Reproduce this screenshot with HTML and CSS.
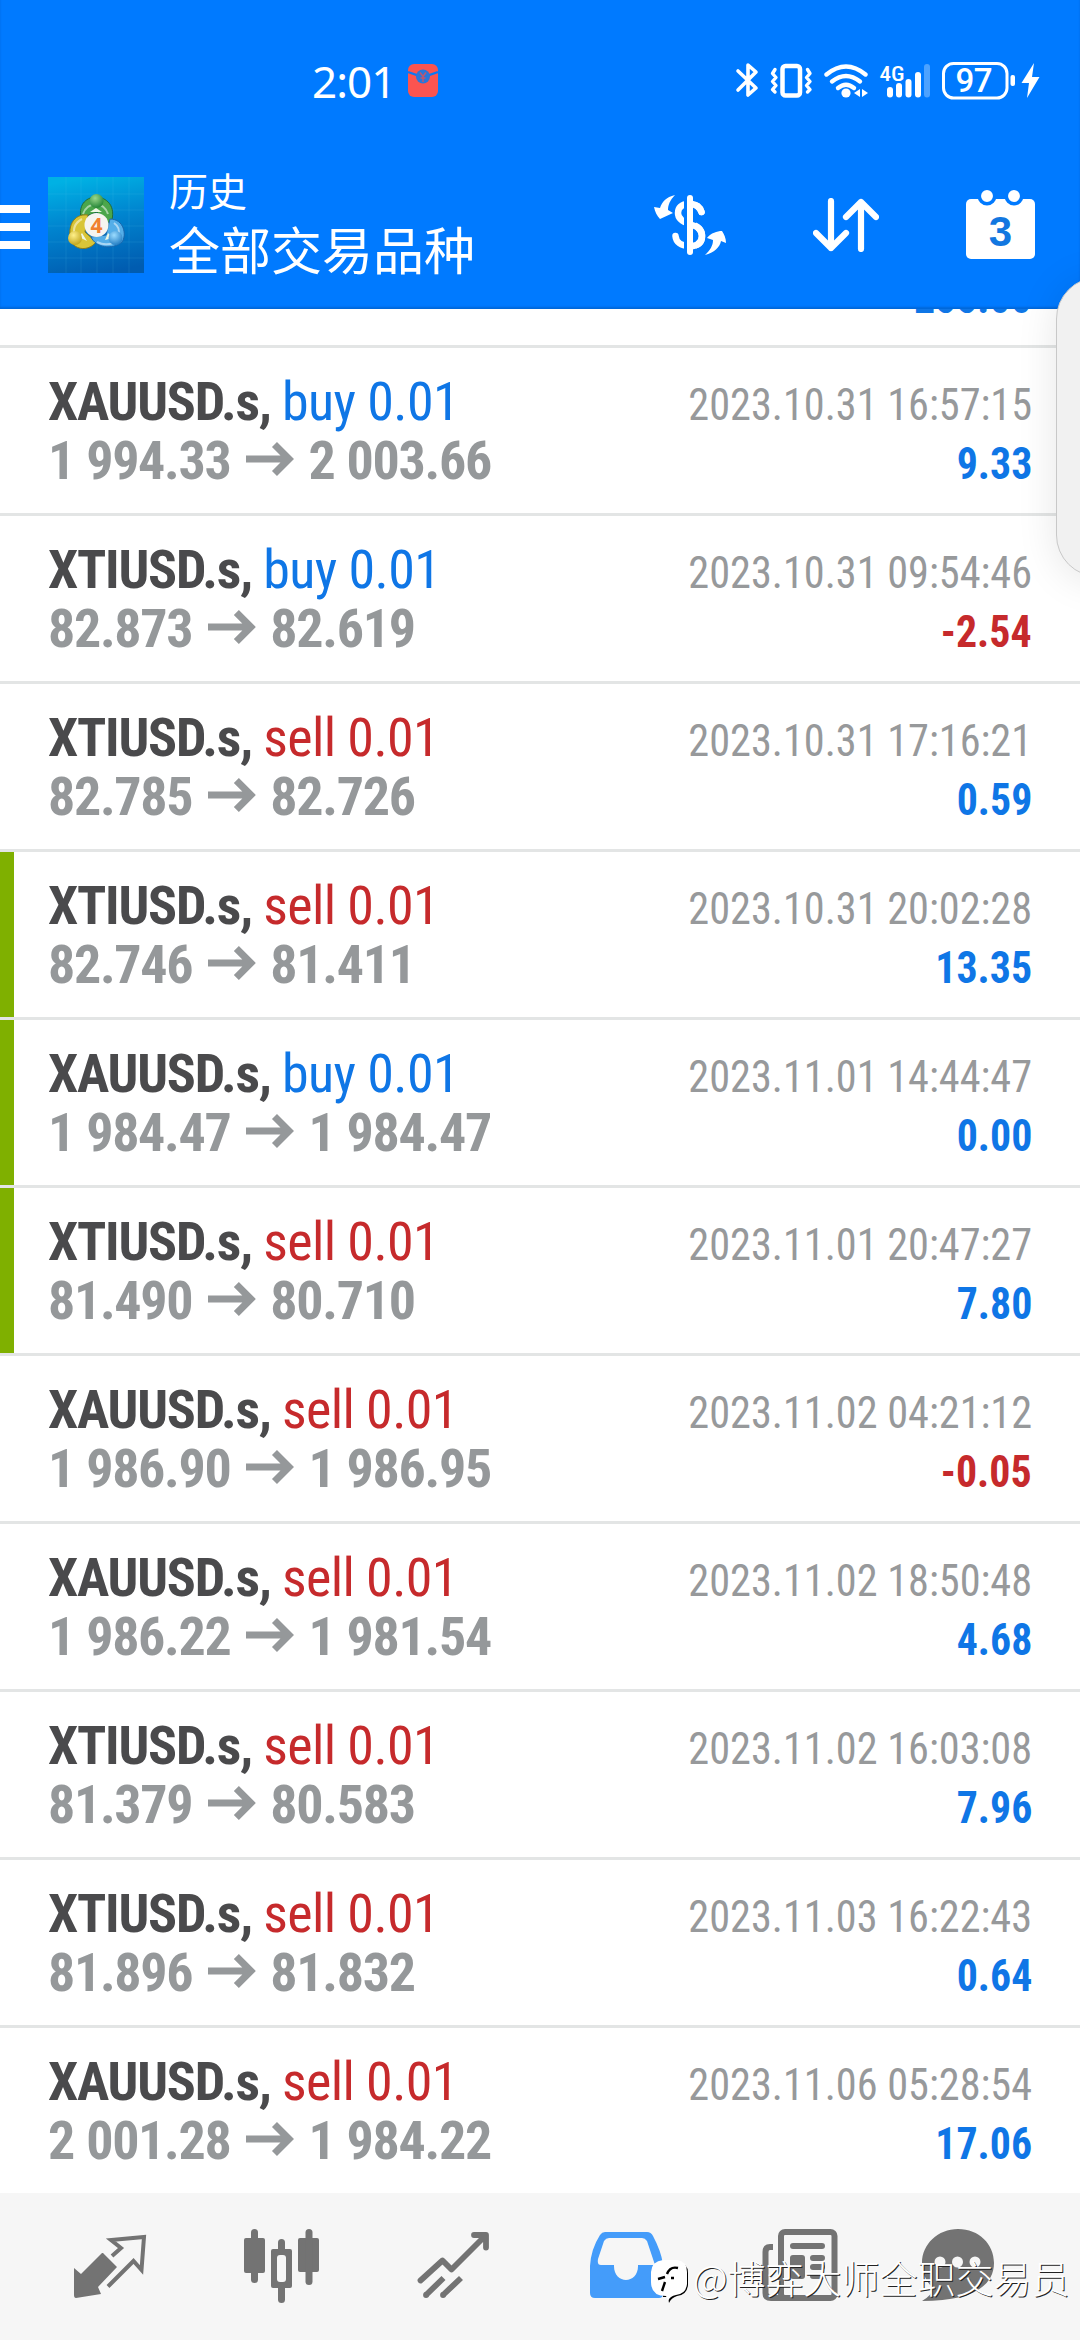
FILE: index.html
```html
<!DOCTYPE html>
<html lang="zh-CN">
<head>
<meta charset="utf-8">
<title>历史</title>
<link rel="stylesheet" href="styles.css">
</head>
<body>
<div class="screen">
  <header class="top">
    <div class="status">
      <div class="status-left">
        <span class="clock">2:01</span>
        <svg class="packet" width="32" height="34" viewBox="0 0 32 34"><rect x="1" y="0" width="30" height="33" rx="6" fill="#fb5450"/><path d="M1 8Q16 15 31 8" fill="none" stroke="#0a78f5" stroke-width="2.4"/><circle cx="16" cy="12.500" r="7" fill="#2b76d8"/><path d="M13 8.500l3 4 3-4M16 12v6M13.500 14h5" fill="none" stroke="#c0566f" stroke-width="1.500"/></svg>
      </div>
      <svg class="status-icons" width="310" height="40" viewBox="734 60 310 40" fill="none" stroke="#fff">
        <path d="M738 71L756 88L748 95V65L756 72L738 90" stroke-width="3.600" stroke-linejoin="round" stroke-linecap="round"/>
        <rect x="782.500" y="66" width="17.500" height="29.500" rx="3" stroke-width="4.500"/>
        <path d="M775 69.500l-2.500 4 3.500 4-3.500 4 3.500 4-3.500 4 2.500 2.500M807.500 69.500l2.500 4-3.500 4 3.500 4-3.500 4 3.500 4-2.500 2.500" stroke-width="3.400" stroke-linecap="round" stroke-linejoin="round"/>
        <g stroke-width="4.400" stroke-linecap="round"><path d="M826.500 74.500Q846 58.500 865.500 74.500"/><path d="M832 81.500Q846 70.500 860 81.500"/><path d="M838 88Q846 81.500 854 88"/></g>
        <g fill="#fff" stroke="none"><circle cx="846" cy="93" r="4.600"/><path d="M860 89v8l-6-4zM862 89v8l6-4z"/>
        <rect x="887" y="87" width="6" height="10.500" rx="3"/><rect x="896" y="83" width="6" height="14.500" rx="3"/><rect x="905.500" y="79" width="6" height="18.500" rx="3"/><rect x="915" y="72" width="6" height="25.500" rx="3"/><rect x="924" y="64" width="6" height="33.500" rx="3" opacity=".3"/>
        <rect x="1010.500" y="75" width="4.500" height="11" rx="2"/><path d="M1034 63L1021.500 83H1029L1027 98L1039.500 77H1032z"/>
        <text class="net" x="879.500" y="80.500" textLength="25" lengthAdjust="spacingAndGlyphs">4G</text><text class="charge" x="955.500" y="92">97</text></g>
        <rect x="943.500" y="63.500" width="63.500" height="34.500" rx="10" stroke-width="3"/>
      </svg>
    </div>
    <div class="appbar">
      <svg class="menu" width="30" height="44" viewBox="0 0 30 44" fill="#fff"><path d="M0 0h30v8H0zM0 18h30v8H0zM0 36h30v8H0z"/></svg>
      <svg class="logo" width="96" height="96" viewBox="0 0 96 96">
        <defs>
          <linearGradient id="sky" x1="0.400" y1="0" x2="0.600" y2="1"><stop offset="0" stop-color="#00b1e4"/><stop offset=".45" stop-color="#0084cf"/><stop offset="1" stop-color="#005cb0"/></linearGradient>
          <radialGradient id="gr" cx=".4" cy=".3" r=".8"><stop offset="0" stop-color="#9bd88c"/><stop offset="1" stop-color="#147a2b"/></radialGradient>
          <radialGradient id="ye" cx=".4" cy=".3" r=".8"><stop offset="0" stop-color="#fff08a"/><stop offset="1" stop-color="#b99c10"/></radialGradient>
          <radialGradient id="bl" cx=".4" cy=".3" r=".8"><stop offset="0" stop-color="#9bdcff"/><stop offset="1" stop-color="#1673bd"/></radialGradient>
        </defs>
        <rect width="96" height="96" fill="url(#sky)"/>
        <path d="M0 17H96M0 33H96M0 49H96M0 65H96M0 81H96M18 0V96M33 0V96M49 0V96M65 0V96M81 0V96" stroke="#5ccdf0" stroke-opacity=".16" stroke-width=".8"/>
        <path d="M33 41C30 26 40 20 48 20C58 20 69 29 63 46L56 44L49 35Z" fill="#4ba64b" stroke="#236c36"/>
        <path d="M40 38C25 36 18 51 24 66C30 74 42 73 48 65L37 55Z" fill="#d9c538" stroke="#8c7a18"/>
        <path d="M62 42C76 42 79 58 74 65C64 73 48 71 43 60L58 58Z" fill="#54aee8" stroke="#1b66ab"/>
        <path d="M35 37Q38 28 48 27Q57 28 60 37M27 60Q23 48 34 42M70 58Q73 51 66 46M49 65Q57 69 65 66" fill="none" stroke="#fff" stroke-opacity=".5" stroke-width="2"/>
        <path d="M42 35l6-4 6 4zM34 56l-3 4 8 4zM60 56l5 5-8 2z" fill="#eef7e4"/>
        <circle cx="48.500" cy="24" r="7" fill="url(#gr)"/><circle cx="27" cy="61" r="7" fill="url(#ye)"/><circle cx="67.500" cy="61" r="7" fill="url(#bl)"/>
        <circle cx="48.500" cy="48" r="12" fill="#f6f4f0"/>
        <text class="four" x="42.500" y="55.500">4</text>
      </svg>
      <div class="titles"><span class="title-small">历史</span><span class="title-large">全部交易品种</span></div>
      <div class="actions">
        <svg width="72" height="60" viewBox="654 195 72 60"><g fill="none" stroke="#fff" stroke-width="6.500"><path d="M701.500 212C700 206 695 204 689 204C681 204 678 208 678 213C678 219 683 222 690 224C698 226 702 230 702 236C702 243 697 246 689 246C681 246 676 242 675.500 236" stroke-linecap="round"/></g><path d="M690 195V255" stroke="#007aff" stroke-width="12"/><path d="M692 204C697 205 700 208 701.500 212M692 225C699 227 702 231 702 236C702 242 698 245 693 246" fill="none" stroke="#fff" stroke-width="6.500" stroke-linecap="round"/><path d="M690 198V252" stroke="#fff" stroke-width="6" stroke-linecap="round"/><path fill="#fff" d="M675 195C666 197 662 202 660 208L654 207C655 212 657 216 660 219L673 213L668 210C668 205 670 200 675 195zM705 255C714 253 720 247 721 241L726 243C726 238 724 234 722 231C717 231 711 233 707 238L713 240C713 246 710 250 705 255z"/></svg>
        <svg width="66" height="54" viewBox="813 198 66 54" fill="none" stroke="#fff" stroke-width="6.200" stroke-linecap="round" stroke-linejoin="round"><path d="M831 201V248M816 233L831 248L846 233M861 249V202M846 217L861 202L876 217"/></svg>
        <svg width="70" height="70" viewBox="966 189 70 70"><rect x="966" y="198" width="69" height="60" rx="5" fill="#fff"/><g fill="#fff" stroke="#007aff" stroke-width="3.500"><circle cx="987" cy="195" r="7.700"/><circle cx="1014" cy="195" r="7.700"/></g><text class="day" x="1000.500" y="245">3</text></svg>
      </div>
    </div>
  </header>

  <main class="list">
    <div class="row row-first"><div class="result"><span class="amount up">255.00</span></div></div>
    <div class="row"><div class="deal"><p class="name">XAUUSD.s, <span class="side up">buy 0.01</span></p><p class="prices">1 994.33<i class="arrow"></i>2 003.66</p></div><div class="result"><span class="time">2023.10.31 16:57:15</span><span class="amount up">9.33</span></div></div>
    <div class="row"><div class="deal"><p class="name">XTIUSD.s, <span class="side up">buy 0.01</span></p><p class="prices">82.873<i class="arrow"></i>82.619</p></div><div class="result"><span class="time">2023.10.31 09:54:46</span><span class="amount down">-2.54</span></div></div>
    <div class="row"><div class="deal"><p class="name">XTIUSD.s, <span class="side down">sell 0.01</span></p><p class="prices">82.785<i class="arrow"></i>82.726</p></div><div class="result"><span class="time">2023.10.31 17:16:21</span><span class="amount up">0.59</span></div></div>
    <div class="row marked"><div class="deal"><p class="name">XTIUSD.s, <span class="side down">sell 0.01</span></p><p class="prices">82.746<i class="arrow"></i>81.411</p></div><div class="result"><span class="time">2023.10.31 20:02:28</span><span class="amount up">13.35</span></div></div>
    <div class="row marked"><div class="deal"><p class="name">XAUUSD.s, <span class="side up">buy 0.01</span></p><p class="prices">1 984.47<i class="arrow"></i>1 984.47</p></div><div class="result"><span class="time">2023.11.01 14:44:47</span><span class="amount up">0.00</span></div></div>
    <div class="row marked"><div class="deal"><p class="name">XTIUSD.s, <span class="side down">sell 0.01</span></p><p class="prices">81.490<i class="arrow"></i>80.710</p></div><div class="result"><span class="time">2023.11.01 20:47:27</span><span class="amount up">7.80</span></div></div>
    <div class="row"><div class="deal"><p class="name">XAUUSD.s, <span class="side down">sell 0.01</span></p><p class="prices">1 986.90<i class="arrow"></i>1 986.95</p></div><div class="result"><span class="time">2023.11.02 04:21:12</span><span class="amount down">-0.05</span></div></div>
    <div class="row"><div class="deal"><p class="name">XAUUSD.s, <span class="side down">sell 0.01</span></p><p class="prices">1 986.22<i class="arrow"></i>1 981.54</p></div><div class="result"><span class="time">2023.11.02 18:50:48</span><span class="amount up">4.68</span></div></div>
    <div class="row"><div class="deal"><p class="name">XTIUSD.s, <span class="side down">sell 0.01</span></p><p class="prices">81.379<i class="arrow"></i>80.583</p></div><div class="result"><span class="time">2023.11.02 16:03:08</span><span class="amount up">7.96</span></div></div>
    <div class="row"><div class="deal"><p class="name">XTIUSD.s, <span class="side down">sell 0.01</span></p><p class="prices">81.896<i class="arrow"></i>81.832</p></div><div class="result"><span class="time">2023.11.03 16:22:43</span><span class="amount up">0.64</span></div></div>
    <div class="row"><div class="deal"><p class="name">XAUUSD.s, <span class="side down">sell 0.01</span></p><p class="prices">2 001.28<i class="arrow"></i>1 984.22</p></div><div class="result"><span class="time">2023.11.06 05:28:54</span><span class="amount up">17.06</span></div></div>
  </main>

  <nav class="tabs">
    <svg viewBox="24 2193 172 147"><path d="M103 2253L117 2267L98 2287L101 2294L76 2298Q74 2298 74 2295V2268L81 2274L102 2253Z" fill="#737373"/><path d="M112 2256L121 2248L111 2240L144 2237L141.500 2270L133.500 2261L108 2286.500" fill="none" stroke="#737373" stroke-width="4"/></svg>
    <svg viewBox="196 2193 172 147"><g fill="#737373"><rect x="244" y="2238" width="21" height="35" rx="2"/><rect x="251" y="2229" width="7" height="54" rx="3.500"/><rect x="298" y="2238" width="21" height="34" rx="2"/><rect x="305.500" y="2229" width="7" height="56" rx="3.500"/><rect x="278" y="2239" width="7" height="64" rx="3.500"/><rect x="271" y="2249" width="21" height="39" rx="2"/></g><rect x="277" y="2255" width="9" height="27" rx="3" fill="#f6f6f6"/></svg>
    <svg viewBox="368 2193 172 147" fill="none" stroke="#737373" stroke-width="5.800"><path d="M420.500 2280.500L442.500 2260.500L451.500 2269.500L485.500 2235.500M474 2235H486V2247.500" stroke-linecap="round" stroke-linejoin="round"/><path d="M426 2295L443.500 2278M443 2295L461 2278" /><path d="M426 2295h.1M443 2295h.1" stroke-linecap="round"/></svg>
    <svg viewBox="540 2193 172 147"><path fill="#449cfa" fill-rule="evenodd" d="M605 2232H647Q651 2232 653 2236Q661 2251 663 2264V2294Q663 2298 659 2298H595Q590 2298 590 2293V2266Q591 2249 600 2235Q602 2232 605 2232ZM609 2238Q606 2238 604 2241L598 2259Q597 2265 601 2265H614C613 2285 639 2285 638 2265H655L647 2241Q645 2238 642 2238Z"/></svg>
    <svg viewBox="712 2193 172 147" fill="none" stroke="#737373"><rect x="781" y="2232" width="53.500" height="66" rx="4" stroke-width="6"/><path d="M773 2247H770Q765.500 2247 765.500 2252V2293Q765.500 2298 771 2298H828" stroke-width="6"/><g stroke-width="6" stroke-linecap="round"><path d="M793 2246H822M813 2258H822M813 2267H822M813 2276H822"/></g><rect x="790" y="2255" width="15" height="24" rx="3" fill="#737373" stroke="none"/></svg>
    <svg viewBox="884 2193 172 147"><path fill="#737373" d="M958 2229C979 2229 994 2244 994 2263C994 2287 970 2301 922 2301Q934 2294 932 2287C925 2280 922 2271 922 2263C922 2244 938 2229 958 2229Z"/><g fill="#f6f6f6"><circle cx="940" cy="2262" r="5.500"/><circle cx="957.500" cy="2262" r="5.500"/><circle cx="975" cy="2262" r="5.500"/></g></svg>
  </nav>

  <div class="edge-panel"></div>
  <div class="watermark">
    <svg width="40" height="44" viewBox="650 2260 40 44"><path d="M665 2263H678Q688 2264 688 2274V2286Q687 2296 677 2297Q671 2299 669 2304L668 2298H663Z" fill="#000"/><path d="M663 2261H677Q687 2262 687 2273V2285Q686 2295 676 2296Q670 2297 668 2302L666 2297Q651 2297 651 2283V2273Q652 2262 663 2261Z" fill="#fff"/><path d="M658 2280L665 2278M662 2292L665 2283M667 2275Q670 2267 678 2269M671 2279H674" fill="none" stroke="#000" stroke-width="2.400"/></svg>
    <span>@博弈大师全职交易员</span>
  </div>
</div>
</body>
</html>
```
FILE: styles.css
```css
* { box-sizing: border-box; }
body { margin: 0; background: #fff; }
p { margin: 0; }

.screen {
  position: relative;
  display: flex;
  flex-direction: column;
  width: 1080px;
  height: 2340px;
  overflow: hidden;
  font-family: "Roboto Condensed", Roboto, sans-serif;
}

/* Header */
.top {
  display: flex;
  flex: 0 0 309px;
  flex-direction: column;
  background: #007aff;
  color: #fff;
  box-shadow: inset 0 -2px 2px rgba(0, 60, 130, .3);
}
.status {
  display: flex;
  justify-content: space-between;
  height: 141px;
  padding: 60px 36px 0 312px;
}
.status-left { display: flex; gap: 18px; height: 40px; }
.clock { width: 77px; font: 450 44px/42px "Noto Sans", sans-serif; letter-spacing: -1px; }
.packet { margin-top: 4px; }
.net { font: 500 21px "Roboto Condensed", Roboto, sans-serif; }
.charge { font: 500 33px Roboto, sans-serif; letter-spacing: -.5px; }

.appbar {
  display: flex;
  align-items: center;
  height: 168px;
  padding-right: 44px;
}
.menu { margin-right: 18px; margin-top: 4px; }
.four { font: 700 21px "Open Sans", sans-serif; fill: #f08030; }
.titles {
  display: flex;
  flex-direction: column;
  margin: -10px 0 0 25px;
  font-family: "Noto Sans CJK SC", sans-serif;
}
.title-small { font-size: 39px; line-height: 56px; }
.title-large { font-size: 51px; line-height: 62px; }
.actions {
  display: flex;
  align-items: center;
  gap: 87px;
  margin-left: auto;
}
.day { font: 700 42px "Liberation Sans", sans-serif; fill: #1277e0; text-anchor: middle; }

/* Deals */
.list {
  display: flex;
  flex: 1;
  flex-direction: column;
  justify-content: flex-end;
  overflow: hidden;
  min-height: 0;
}
.row {
  display: flex;
  flex: none;
  justify-content: space-between;
  height: 168px;
  padding: 24px 48px 0;
  border-top: 3px solid #e3e5e5;
}
.row-first { height: 36px; padding-top: 0; border: 0; justify-content: flex-end; align-items: flex-end; padding-bottom: 18px; }
.marked {
  background: linear-gradient(90deg, #7fb000 14px, transparent 14px);
  background-clip: padding-box;
}
.deal, .result { display: flex; flex-direction: column; }
.result { align-items: flex-end; padding-top: 3px; }
.name, .prices {
  font-size: 54px;
  font-weight: 700;
  line-height: 59px;
  white-space: pre;
}
.name { color: #4a4a4c; letter-spacing: -1.2px; }
.prices { color: #95989a; letter-spacing: -1.3px; word-spacing: 1px; }
.side { font-weight: 400; letter-spacing: -.6px; }
.time, .amount { font-size: 45px; line-height: 59px; transform-origin: right; }
.time { color: #97999b; transform: scaleX(.939); }
.amount { font-weight: 700; transform: scaleX(.93); }
.up { color: #0f76e6; }
.down { color: #c62a2c; }
.arrow {
  display: inline-block;
  width: 48px;
  height: 34px;
  margin: 0 14.5px 0 15.5px;
  vertical-align: 3px;
  background: #95989a;
  clip-path: polygon(0 13.5px, 34.500px 13.5px, 26px 5px, 31px 0, 48px 17px, 31px 34px, 26px 29px, 34.500px 20.5px, 0 20.5px);
}

/* Bottom tabs */
.tabs {
  display: flex;
  flex: 0 0 147px;
  padding: 0 24px;
  background: #f6f6f6;
}
.tabs svg { width: 172px; height: 147px; }

/* Overlays */
.edge-panel {
  position: absolute;
  top: 277px;
  right: -60px;
  width: 84px;
  height: 300px;
  border: 1px solid #c8c8c8;
  border-radius: 45px;
  background: #f1f1f1;
  box-shadow: 0 4px 40px rgba(0, 0, 0, .1);
}
.watermark {
  position: absolute;
  left: 650px;
  top: 2253px;
  display: flex;
  align-items: center;
  gap: 3px;
  height: 56px;
  color: #fff;
  font: 300 38px/56px "Noto Sans CJK SC", sans-serif;
  text-shadow: 1px 1px 0 #222;
  white-space: nowrap;
}
.watermark span { margin-top: -8px; }
```
